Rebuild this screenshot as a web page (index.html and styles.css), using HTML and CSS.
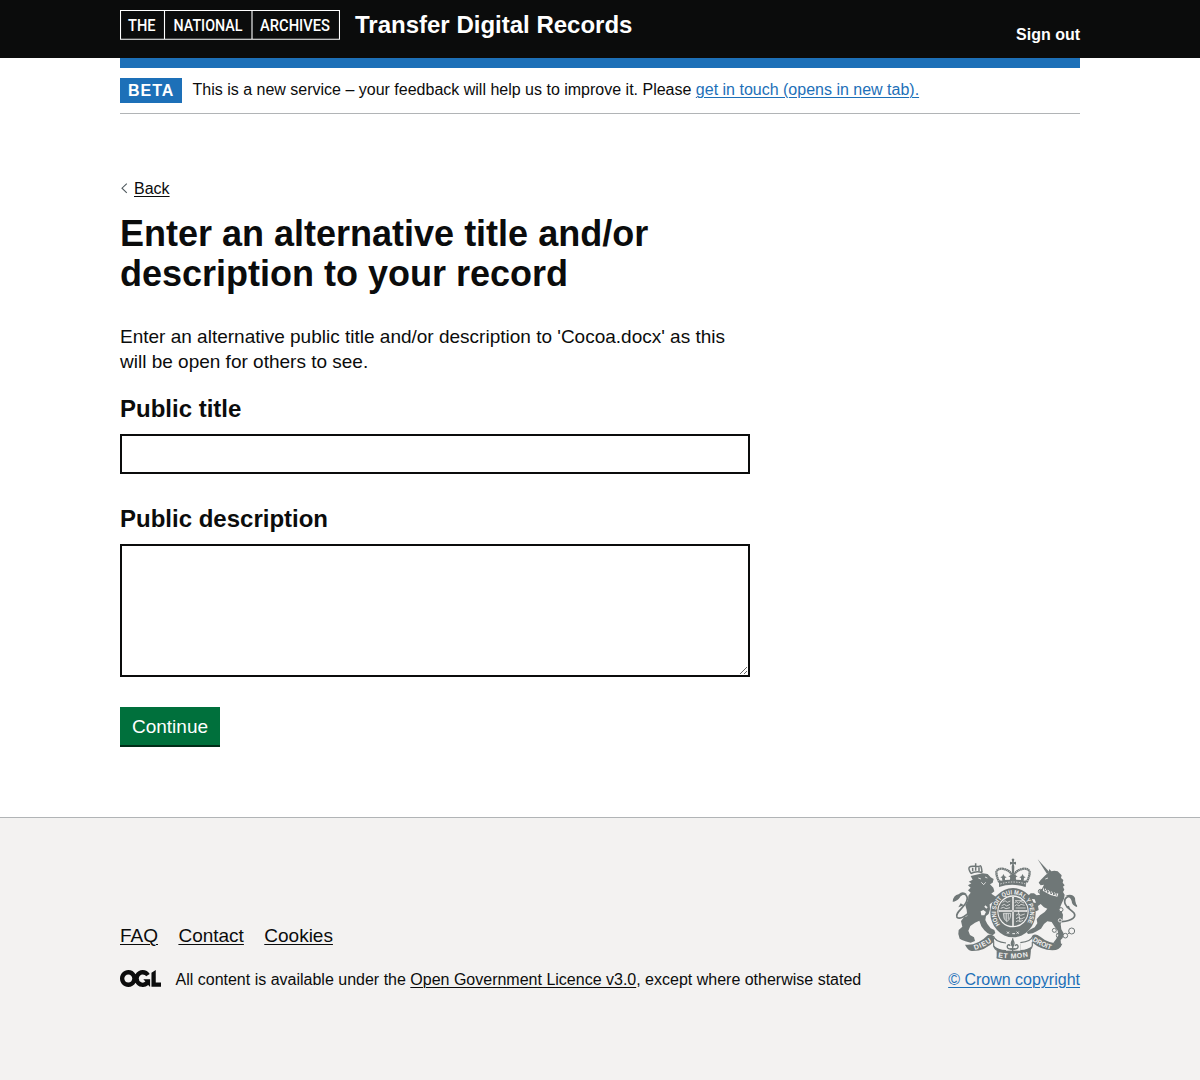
FILE: index.html
```html
<!DOCTYPE html>
<html lang="en">
<head>
<meta charset="utf-8">
<title>Transfer Digital Records</title>
<link rel="stylesheet" href="styles.css">
</head>
<body>
<header class="header">
  <div class="container header-row">
    <a class="brand" href="#">
      <svg class="tna-logo" width="220" height="30" viewBox="0 0 220 30" role="img" aria-label="The National Archives">
        <path d="M.5.5h219v28.7H.5zM44.5.5v29M132 .5v29" fill="none" stroke="#fff" stroke-width="1.1"/>
        <g class="logo-text">
          <text transform="translate(8 21) scale(.86 1)" textLength="32" lengthAdjust="spacingAndGlyphs">THE</text>
          <text transform="translate(53.5 21) scale(.86 1)" textLength="80.2" lengthAdjust="spacingAndGlyphs">NATIONAL</text>
          <text transform="translate(140 21) scale(.86 1)" textLength="81.4" lengthAdjust="spacingAndGlyphs">ARCHIVES</text>
        </g>
      </svg>
      <span class="service-name">Transfer Digital Records</span>
    </a>
    <a class="sign-out" href="#">Sign out</a>
  </div>
</header>
<div class="container">
  <div class="blue-bar"></div>
  <div class="phase-banner">
    <strong class="tag">BETA</strong>
    <span class="phase-text">This is a new service – your feedback will help us to improve it. Please <a href="#">get in touch (opens in new tab).</a></span>
  </div>
  <main class="main">
    <a class="back" href="#"><svg width="8" height="12" viewBox="0 0 8 12"><path d="M6.8 1.6 2 6.2l4.8 4.6" fill="none" stroke="#505a5f" stroke-width="1.1"/></svg><span class="back-label">Back</span></a>
    <h1 class="title">Enter an alternative title and/or description to your record</h1>
    <p class="intro">Enter an alternative public title and/or description to 'Cocoa.docx' as this will be open for others to see.</p>
    <form class="form">
      <label class="label" for="title">Public title</label>
      <input class="input" id="title" type="text">
      <label class="label" for="description">Public description</label>
      <textarea class="textarea" id="description"></textarea>
      <button class="button" type="button">Continue</button>
    </form>
  </main>
</div>
<footer class="footer">
  <div class="container footer-row">
    <div class="footer-meta">
      <nav class="footer-links"><a href="#">FAQ</a><a href="#">Contact</a><a href="#">Cookies</a></nav>
      <div class="licence">
        <svg class="ogl" width="41" height="17" viewBox="0 0 483.2 195.7" preserveAspectRatio="none"><path fill="#0b0c0c" d="M421.5 142.8V.1l-50.7 32.3v161.1h112.4v-50.7zm-122.3-9.6A47.12 47.12 0 0 1 221 97.8c0-26 21.1-47.1 47.1-47.1 16.7 0 31.4 8.7 39.7 21.8l42.7-27.2A97.63 97.63 0 0 0 268.1 0c-36.5 0-68.3 20.1-85.1 49.7A98 98 0 0 0 97.8 0C43.9 0 0 43.9 0 97.8s43.9 97.8 97.8 97.8c36.5 0 68.3-20.1 85.1-49.7a97.76 97.76 0 0 0 149.6 25.4l19.4 22.2h3v-87.8h-80l24.3 27.5zM97.8 145c-26 0-47.1-21.1-47.1-47.1s21.1-47.1 47.1-47.1 47.1 21.1 47.1 47.1S123.8 145 97.8 145"/></svg>
        <span>All content is available under the <a href="#">Open Government Licence v3.0</a>, except where otherwise stated</span>
      </div>
    </div>
    <a class="crown" href="#">
      <svg width="130" height="103" viewBox="30 21 390 309" aria-hidden="true">
        <defs>
          <path id="motto" d="M180 223.4A51 55 0 1 1 258 223.4"/>
          <path id="dieu" d="M104 300Q133 292 161 270"/>
          <path id="etmon" d="M174 322Q219 330 266 319"/>
          <path id="droit" d="M277 272Q305 291 338 300"/>
        </defs>
        <!-- lion -->
        <g fill="#6f7777">
          <path d="M92 78 128 70 143 72 152 82 161 87 158 98 150 103 160 113 163 124 154 131 165 139 177 141 183 151 174 157 158 156 149 163 150 178 146 192 138 198 136 210 142 222 152 235 163 240 166 249 158 256 143 250 133 241 124 229 118 212 105 218 91 228 85 242 90 255 102 262 105 273 92 278 76 274 66 270 59 266 55 252 56 240 67 230 63 213 72 202 82 198 80 180 76 166 84 151 85 137 92 128 84 121 92 113 84 106 94 100 86 95 98 89Z"/>
        </g>
        <path d="M92 71Q109 62 127 68M93 70Q84 57 88 52T104 49T120 48T126 66M107 40V62M98 53V64M117 52V63" fill="none" stroke="#6f7777" stroke-width="4.5"/>
        <path d="m115 84 8 3m12-6 7 3m-18 13 7 7 6-7" stroke="#f3f2f1" stroke-width="2.5" fill="none"/>
        <path d="M122 184l8-4 8 6-5 10h-9ZM136 166l7 6-4 4-6-6Z" fill="#f3f2f1"/>
        <path d="M87 188Q62 211 51 202C43 188 74 172 80 154 86 138 75 128 64 134 48 137 52 151 40 152" fill="none" stroke="#6f7777" stroke-width="5"/>
        <path d="M38 155q2-20 18-22 12-12 25 0-17-1-21 9-7 12-22 13m34 11-17 6 7-12" fill="#6f7777"/>
        <!-- unicorn -->
        <g fill="#6f7777">
          <path d="m293 28 35 38-7 6Z"/>
          <path d="M316 76 325 68 328 57 334 64 343 62 353 64 359 70 365 76 363 84 370 90 368 98 374 106 369 110 373 119 369 126 374 134 372 146 366 158 361 170 364 182 369 194 368 208 362 222 364 238 371 250 368 264 362 270 363 282 355 288 346 282 340 278 348 268 355 256 353 242 344 230 335 216 322 214 312 222 303 236 290 244 278 250 264 252 260 246 272 238 284 232 292 220 290 208 300 196 314 186 322 176 312 172 302 162 294 168 296 180 288 184 276 178 270 168 276 158 288 158 284 148 270 146 264 138 272 130 282 130 290 136 300 134 298 122 306 116 312 104 302 106 296 98 302 90Z"/>
        </g>
        <path d="M311 113Q331 126 355 131l-3 9Q329 136 308 122Z" fill="#f3f2f1"/>
        <path d="m313 113 2 11 6-7 2 11 8-8 2 12 7-9 1 12 7-9 1 11" stroke="#6f7777" stroke-width="3" fill="none"/>
        <path d="m316 87 8-3" stroke="#f3f2f1" stroke-width="2.5" fill="none"/>
        <path d="M365 215c34-3 44-15 37-26-12-13-27-18-28-33-1-14 11-20 23-14 8 6 4 20 13 27" fill="none" stroke="#6f7777" stroke-width="5"/>
        <path d="M376 138q20-10 29 6-1 14 7 27-17-5-17-18-4-13-19-15m11 29-10 3 15 12" fill="#6f7777"/>
        <g fill="none" stroke="#6f7777" stroke-width="3"><circle cx="343" cy="241" r="6"/><circle cx="356" cy="257" r="7"/><circle cx="376" cy="257" r="7"/><circle cx="395" cy="243" r="9"/><path d="M349 248l5 5M383 252l6-4"/><circle cx="301" cy="124" r="6"/></g>
        <circle cx="363" cy="179" r="6" fill="#f3f2f1" stroke="#6f7777" stroke-width="3"/>
        <circle cx="360" cy="211" r="5" fill="none" stroke="#f3f2f1" stroke-width="2.5"/>
        <!-- royal crown -->
        <path d="M178 97q-9-18-9-31 3-11 18-10 21 4 27 16 1 9-1 19m47 6q9-18 9-31-3-11-18-10-21 4-27 16-1 9 1 19" fill="none" stroke="#6f7777" stroke-width="7" stroke-dasharray="5 1"/>
        <path d="m215 50 2-9-7 3v-9l7 2-2-9q4-5 8 0l-2 9 7-2v9l-7-3 2 9-1 20h-6Z" fill="#6f7777"/>
        <path d="m177 91 10 1-1-8-5-2 6-3 3-7 4 7 6 3-5 2v6l16-1v-7l-6-3 8-3 6-9 6 9 8 3-6 3v7l16 1v-6l-5-2 6-3 4-7 3 7 6 3-5 2-1 8 9-1-3 20q-40-13-80 0Z" fill="#6f7777"/>
        <path d="M181 102q38-12 76 0" fill="none" stroke="#f3f2f1" stroke-width="2.5" stroke-dasharray="4 4"/>
        <!-- garter and shield -->
        <ellipse cx="219" cy="188" rx="68" ry="74" fill="#6f7777"/>
        <text class="garter-text"><textPath href="#motto" textLength="235" lengthAdjust="spacingAndGlyphs">HONI SOIT QUI MAL Y PENSE</textPath></text>
        <g transform="translate(0 -7)">
          <ellipse cx="219" cy="191" rx="47" ry="48" fill="#f3f2f1"/>
          <circle cx="219" cy="191" r="44" fill="#6f7777"/>
          <path d="M219 148v86M176 190h86" stroke="#f3f2f1" stroke-width="6"/>
          <path d="M219 150v82M178 190h82" stroke="#6f7777" stroke-width="1.5"/>
          <g fill="none" stroke="#f3f2f1" stroke-width="2.2">
            <path d="m188 164 7-5 7 5 9-4m-26 14 8-4 7 5 10-5m-28 12 8-3 8 4 12-3m15-21h28m-29 6 5-3 6 5 7-6 10 5m-28 9 6-4 7 4 6-5 11 3m-27 8h30"/>
            <path d="M190 197h22q1 18-12 25-11-8-10-25m5 1v18m5-19v23m5-22v17"/>
            <path d="m228 203 7-5 7 5 12-4m-26 14 8-4 7 5 11-5m-26 13 6-3 7 3 8-4m-14-30 5 34"/>
          </g>
        </g>
        <path d="m201 245 6 6m-6 0 6-6m10 6h8m5 0 6-6m-6 0 6 6" stroke="#f3f2f1" stroke-width="3"/>
        <!-- motto ribbons -->
        <path d="M75 284Q112 288 144 255 153 251 160 258 162 272 178 278 219 291 264 277 275 270 279 255 287 250 301 260 326 282 367 281 360 301 337 301 304 301 275 276L270 327Q219 336 170 325L173 302 160 290 164 273Q135 304 95 303Q83 301 75 284Z" fill="#6f7777"/>
        <path d="M162 259q5 18 36 21v20q-24-1-36-13m115-28q-5 18-36 21v20q24-1 36-13" fill="#f3f2f1"/>
        <path d="M198 276h43v26h-43Z" fill="#f3f2f1"/>
        <path d="M160 258q5 18 38 21M279 257q-5 18-38 21M161 287q3 13 15 16m101-16q-3 13-15 16M161 274v14m116-12v12" fill="none" stroke="#6f7777" stroke-width="3.5"/>
        <path d="M170 303q48 12 101 0l-1 24q-50 9-100-2Z" fill="#6f7777"/>
        <text class="ribbon-text"><textPath href="#dieu" textLength="57">DIEU</textPath></text>
        <text class="ribbon-text"><textPath href="#etmon" textLength="91">ET MON</textPath></text>
        <text class="ribbon-text"><textPath href="#droit" textLength="61" lengthAdjust="spacingAndGlyphs">DROIT</textPath></text>
        <g fill="none" stroke="#6f7777" stroke-width="4"><path d="M218 265v39m-7-7h15"/><path d="M218 270q-8 10 0 20 8-10 0-20m-2 27q-16 1-14-9 3-7 9-1m9 10q16 1 14-9-3-7-9-1"/></g>
      </svg>
      <span>© Crown copyright</span>
    </a>
  </div>
</footer>
</body>
</html>
```
FILE: styles.css
```css
* { box-sizing: border-box; }
body {
  margin: 0;
  min-height: 1080px;
  display: flex;
  flex-direction: column;
  font: 16px/20px "Liberation Sans", Arial, sans-serif;
  color: #0b0c0c;
  background: #fff;
}
a { color: #0b0c0c; text-decoration-thickness: 1px; text-underline-offset: 1.6px; }
.container { width: 960px; margin: 0 auto; }
.header { height: 58px; background: #0b0c0c; }
.header-row { display: flex; justify-content: space-between; padding-top: 10px; }
.header a { color: #fff; text-decoration: none; font-weight: bold; }
.brand { display: flex; gap: 15px; height: 30px; }
.service-name { font-size: 24px; line-height: 30px; }
.logo-text { font: 500 16.5px Roboto, sans-serif; fill: #fff; }
.sign-out { padding-top: 15px; }
.blue-bar { height: 10px; background: #1d70b8; }
.phase-banner {
  display: flex;
  gap: 10.5px;
  height: 46px;
  padding-top: 10px;
  border-bottom: 1px solid #b1b4b6;
}
.tag {
  width: 62px;
  height: 25px;
  padding-left: 8px;
  line-height: 25px;
  letter-spacing: 1px;
  color: #fff;
  background: #1d70b8;
}
.phase-text { line-height: 24px; }
.phase-text a, .crown { color: #1d70b8; }
.main { width: 630px; padding-top: 65px; }
.back { display: flex; align-items: center; gap: 6px; height: 20px; text-decoration: none; }
.back svg { margin-bottom: 2px; }
.back-label { text-decoration: underline; text-decoration-thickness: 1px; text-underline-offset: 1.6px; }
.title { margin: 15px 0 30px; font-size: 36px; line-height: 40px; }
.intro { margin: 0 0 20px; font-size: 19px; line-height: 25px; }
.form { display: flex; flex-direction: column; align-items: flex-start; }
.label { margin-bottom: 10px; font-size: 24px; line-height: 30px; font-weight: bold; }
.input, .textarea {
  width: 100%;
  border: 2px solid #0b0c0c;
  border-radius: 0;
  background: #fff;
}
.input { height: 40px; margin-bottom: 30px; }
.textarea { height: 133px; margin-bottom: 30px; resize: vertical; }
.button {
  width: 100px;
  height: 40px;
  padding: 2px 0 0;
  border: 0;
  border-bottom: 2px solid #002d18;
  font: 19px/36px "Liberation Sans", Arial, sans-serif;
  color: #fff;
  background: #00703c;
}
.footer { flex: 1; margin-top: 70px; border-top: 1px solid #b1b4b6; background: #f3f2f1; }
.footer-row { display: flex; justify-content: space-between; align-items: flex-end; padding-top: 39px; }
.footer-links { display: flex; gap: 20.4px; margin-bottom: 22px; font-size: 19px; line-height: 25px; }
.licence { display: flex; gap: 14.5px; line-height: 20px; }
.ogl { flex: none; }
.crown { display: flex; flex-direction: column; align-items: flex-end; gap: 10px; }
.garter-text { font: bold 19px "Liberation Sans", sans-serif; fill: #f3f2f1; }
.ribbon-text { font: bold 21px "Liberation Sans", sans-serif; fill: #f3f2f1; }
```
